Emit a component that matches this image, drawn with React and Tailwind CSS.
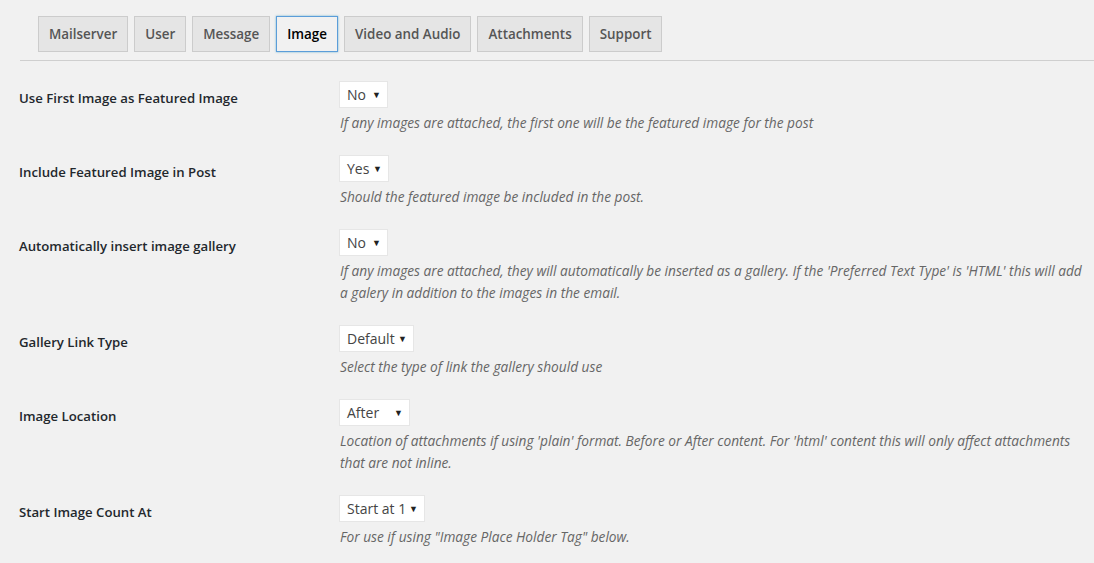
import React from 'react';

const tabs = ['Mailserver', 'User', 'Message', 'Image', 'Video and Audio', 'Attachments', 'Support'];

const rows = [
  {
    label: 'Use First Image as Featured Image',
    value: 'No',
    width: 'w-[47px]',
    desc: ['If any images are attached, the first one will be the featured image for the post'],
  },
  {
    label: 'Include Featured Image in Post',
    value: 'Yes',
    width: 'w-[48px]',
    desc: ['Should the featured image be included in the post.'],
  },
  {
    label: 'Automatically insert image gallery',
    value: 'No',
    width: 'w-[47px]',
    desc: [
      "If any images are attached, they will automatically be inserted as a gallery. If the 'Preferred Text Type' is 'HTML' this will add",
      'a galery in addition to the images in the email.',
    ],
  },
  {
    label: 'Gallery Link Type',
    value: 'Default',
    width: 'w-[73px]',
    desc: ['Select the type of link the gallery should use'],
  },
  {
    label: 'Image Location',
    value: 'After',
    width: 'w-[69px]',
    desc: [
      "Location of attachments if using 'plain' format. Before or After content. For 'html' content this will only affect attachments",
      'that are not inline.',
    ],
  },
  {
    label: 'Start Image Count At',
    value: 'Start at 1',
    width: 'w-[84px]',
    desc: ['For use if using "Image Place Holder Tag" below.'],
  },
];

function Select({ value, width }) {
  return (
    <div className={`flex h-[25px] ${width} items-center justify-between bg-white pl-[7px] pr-[6px] text-[14px] text-[#444] shadow-[0_0_0_1px_#e6e6e6]`}>
      <span>{value}</span>
      <span className="text-[9px] text-[#222]">▼</span>
    </div>
  );
}

export default function App() {
  return (
    <div className="min-h-[563px] w-[1094px] overflow-hidden bg-[#f1f1f1] font-['Open_Sans',sans-serif]">
      {/* Tab bar */}
      <div className="ml-[20px] flex gap-[6px] border-b border-[#cfcfcf] pl-[18px] pt-[16px] pb-[8px]">
        {tabs.map((t) =>
          t === 'Image' ? (
            <div
              key={t}
              className="flex h-[36px] items-center border border-[#5b9dd9] bg-[#f1f1f1] px-[10px] text-[13.4px] font-semibold text-black shadow-[0_0_2px_rgba(30,140,190,0.6)]"
            >
              {t}
            </div>
          ) : (
            <div
              key={t}
              className="flex h-[36px] items-center border border-[#cccccc] bg-[#e5e5e5] px-[10px] text-[13.4px] font-semibold text-[#555]"
            >
              {t}
            </div>
          )
        )}
      </div>

      {/* Settings rows */}
      <div className="pt-[10px]">
        {rows.map((r) => (
          <div key={r.label} className="flex py-[11px]">
            <div className="w-[340px] shrink-0 pl-[19px] pt-[6px] text-[13.2px] font-semibold leading-[20px] text-[#23282d]">
              {r.label}
            </div>
            <div className="flex flex-col gap-[5px]">
              <Select value={r.value} width={r.width} />
              <p className="whitespace-nowrap text-[13.7px] italic leading-[22px] text-[#666]">
                {r.desc.map((line, i) => (
                  <React.Fragment key={i}>
                    {i > 0 && <br />}
                    {line}
                  </React.Fragment>
                ))}
              </p>
            </div>
          </div>
        ))}
      </div>
    </div>
  );
}
